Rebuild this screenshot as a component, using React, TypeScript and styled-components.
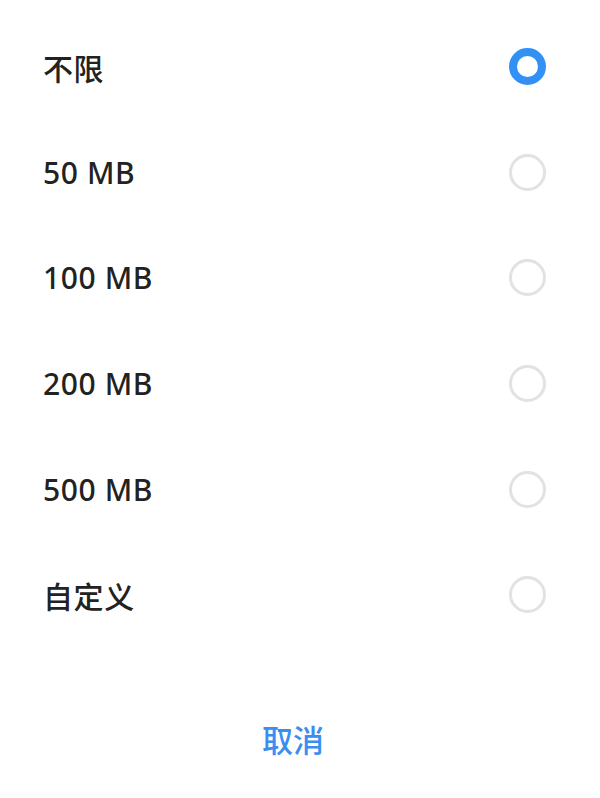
import styled, { createGlobalStyle } from "styled-components";
import { useState } from "react";

const GlobalStyle = createGlobalStyle`
  body {
    margin: 0;
    background: #ffffff;
    font-family: "Noto Sans", "Noto Sans CJK SC", sans-serif;
  }
`;

const Sheet = styled.div`
  width: 600px;
  height: 798px;
  background: #ffffff;
  display: flex;
  flex-direction: column;
  padding-top: 14px;
  box-sizing: border-box;
`;

const List = styled.div`
  display: flex;
  flex-direction: column;
`;

const Row = styled.label`
  height: 105.6px;
  display: flex;
  align-items: center;
  justify-content: space-between;
  padding: 0 54px 0 43px;
  cursor: pointer;
`;

const Label = styled.span`
  font-size: 30px;
  color: #222222;
  font-weight: 500;
  letter-spacing: 0.6px;
`;

const Radio = styled.span<{ checked?: boolean }>`
  width: 37px;
  height: 37px;
  box-sizing: border-box;
  border-radius: 50%;
  border: ${(p) => (p.checked ? "8px solid #3391f5" : "3px solid #e2e2e2")};
`;

const Footer = styled.div`
  flex: 1;
  display: flex;
  justify-content: center;
  padding-top: 68px;
  padding-right: 14px;
`;

const CancelButton = styled.button`
  border: none;
  background: none;
  font-family: "Noto Sans CJK SC", sans-serif;
  font-size: 31px;
  font-weight: 500;
  color: #3a8ef0;
  height: 44px;
  padding: 0 10px;
  cursor: pointer;
`;

const options = ["不限", "50 MB", "100 MB", "200 MB", "500 MB", "自定义"];

const App = () => {
  const [selected, setSelected] = useState(0);
  return (
    <Sheet>
      <GlobalStyle />
      <List>
        {options.map((opt, i) => (
          <Row key={opt} onClick={() => setSelected(i)}>
            <Label>{opt}</Label>
            <Radio checked={selected === i} />
          </Row>
        ))}
      </List>
      <Footer>
        <CancelButton>取消</CancelButton>
      </Footer>
    </Sheet>
  );
};

export default App;
